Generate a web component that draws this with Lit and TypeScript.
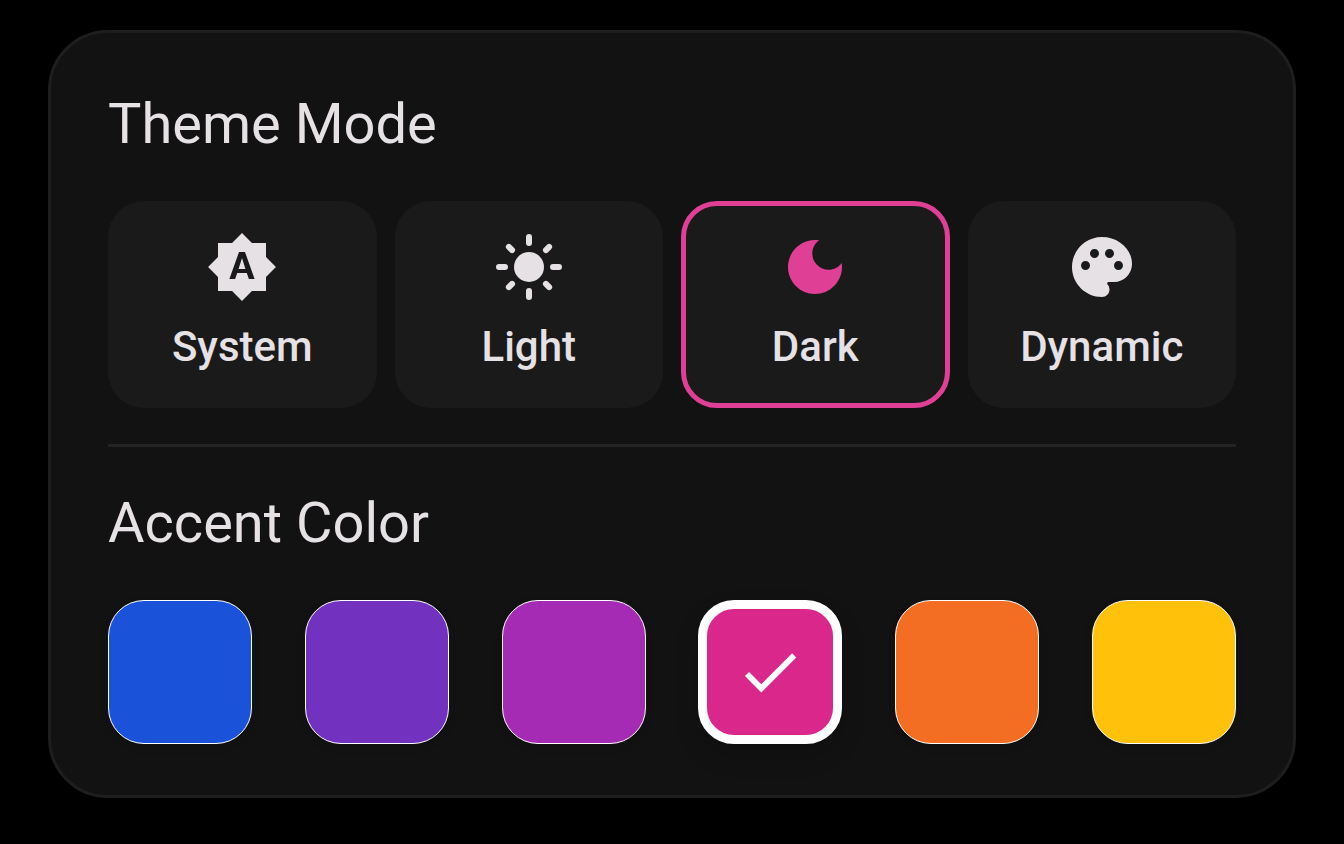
import { LitElement, html, css, svg } from "lit";
import { customElement, state } from "lit/decorators.js";
import { classMap } from "lit/directives/class-map.js";
import { styleMap } from "lit/directives/style-map.js";

const modes = [
  {
    name: "System",
    icon: svg`<path d="M10.85 12.65h2.3L12 9l-1.15 3.65zM20 8.69V4h-4.69L12 .69 8.69 4H4v4.69L.69 12 4 15.31V20h4.69L12 23.31 15.31 20H20v-4.69L23.31 12 20 8.69zM14.3 16l-.7-2h-3.2l-.7 2H7.8L11 7h2l3.2 9h-1.9z"/>`,
  },
  {
    name: "Light",
    icon: svg`<circle cx="12" cy="12" r="5"/><path stroke="currentColor" stroke-width="2" stroke-linecap="round" d="M12 2v2M12 20v2M2 12h2M20 12h2M5.29 5.29l1.06 1.06M17.65 17.65l1.06 1.06M5.29 18.71l1.06-1.06M17.65 6.35l1.06-1.06"/>`,
  },
  {
    name: "Dark",
    icon: svg`<path d="M12 3c-4.97 0-9 4.03-9 9s4.03 9 9 9 9-4.03 9-9c0-.46-.04-.92-.1-1.36-.98 1.37-2.58 2.26-4.4 2.26-2.98 0-5.4-2.42-5.4-5.4 0-1.81.89-3.42 2.26-4.4C12.92 3.04 12.46 3 12 3z"/>`,
  },
  {
    name: "Dynamic",
    icon: svg`<path d="M12 2C6.49 2 2 6.49 2 12s4.49 10 10 10c1.38 0 2.5-1.12 2.5-2.5 0-.61-.23-1.2-.64-1.67-.08-.1-.13-.21-.13-.33 0-.28.22-.5.5-.5H16c3.31 0 6-2.69 6-6 0-4.96-4.49-9-10-9zM6.5 13C5.67 13 5 12.33 5 11.5S5.67 10 6.5 10 8 10.67 8 11.5 7.33 13 6.5 13zm3-4C8.67 9 8 8.33 8 7.5S8.67 6 9.5 6s1.5.67 1.5 1.5S10.33 9 9.5 9zm5 0c-.83 0-1.5-.67-1.5-1.5S13.67 6 14.5 6s1.5.67 1.5 1.5S15.33 9 14.5 9zm3 4c-.83 0-1.5-.67-1.5-1.5s.67-1.5 1.5-1.5 1.5.67 1.5 1.5-.67 1.5-1.5 1.5z"/>`,
  },
];

const accents = [
  { name: "Blue", color: "#1a53d9" },
  { name: "Violet", color: "#7331c0" },
  { name: "Purple", color: "#a52bb4" },
  { name: "Pink", color: "#da278b" },
  { name: "Orange", color: "#f36e22" },
  { name: "Yellow", color: "#ffc10a" },
];

@customElement("app-root")
export class AppRoot extends LitElement {
  @state() private mode = "Dark";
  @state() private accent = "Pink";

  static styles = css`
    :host {
      display: block;
      box-sizing: border-box;
      min-height: 100vh;
      padding: 30px 48px;
      background: #000;
      color: #e6e1e5;
      font-family: Roboto, sans-serif;
    }
    .card {
      border: 3px solid #1e1e1e;
      border-radius: 60px;
      padding: 57px 57px 51px;
      background: #121212;
    }
    .title {
      margin: 0 0 42px;
      font-size: 56px;
      line-height: 69px;
      font-weight: 400;
    }
    .modes {
      display: grid;
      grid-template-columns: repeat(4, minmax(0, 1fr));
      gap: 18px;
    }
    button {
      box-sizing: border-box;
      margin: 0;
      font: inherit;
      color: inherit;
      cursor: pointer;
    }
    .mode {
      display: flex;
      flex-direction: column;
      align-items: center;
      gap: 12px;
      padding: 25px 0;
      border: 5px solid transparent;
      border-radius: 36px;
      background: #1a1a1a;
      font-size: 42px;
      line-height: 63px;
      font-weight: 500;
    }
    .mode.selected {
      border-color: #df4095;
    }
    .icon {
      display: block;
      width: 72px;
      height: 72px;
      fill: currentColor;
    }
    .selected .icon {
      color: #df4095;
    }
    .divider {
      height: 3px;
      margin: 36px 0 42px;
      border: 0;
      background: #232323;
    }
    .accents {
      display: flex;
      justify-content: space-between;
    }
    .swatch {
      display: grid;
      place-items: center;
      width: 144px;
      height: 144px;
      padding: 0;
      border: 1px solid #fff;
      border-radius: 36px;
      box-shadow: 0 3px 9px rgba(0, 0, 0, 0.12);
    }
    .swatch.chosen {
      border-width: 9px;
      box-shadow: 0 12px 24px rgba(0, 0, 0, 0.16);
    }
    .check {
      display: block;
      width: 70px;
      height: 70px;
      fill: #fff;
    }
  `;

  render() {
    return html`
      <main class="card">
        <h2 class="title" id="mode-title">Theme Mode</h2>
        <div class="modes" role="group" aria-labelledby="mode-title">
          ${modes.map(
            (m) => html`<button
              type="button"
              class=${classMap({ mode: true, selected: m.name === this.mode })}
              aria-pressed=${m.name === this.mode}
              @click=${() => (this.mode = m.name)}
            >
              <svg class="icon" viewBox="0 0 24 24" aria-hidden="true">${m.icon}</svg>
              <span>${m.name}</span>
            </button>`
          )}
        </div>
        <hr class="divider" />
        <h2 class="title" id="accent-title">Accent Color</h2>
        <div class="accents" role="group" aria-labelledby="accent-title">
          ${accents.map(
            (a) => html`<button
              type="button"
              class=${classMap({ swatch: true, chosen: a.name === this.accent })}
              style=${styleMap({ backgroundColor: a.color })}
              aria-label=${a.name}
              aria-pressed=${a.name === this.accent}
              @click=${() => (this.accent = a.name)}
            >
              ${a.name === this.accent
                ? html`<svg class="check" viewBox="0 0 24 24" aria-hidden="true">
                    <path d="M9 16.17L4.83 12l-1.42 1.41L9 19 21 7l-1.41-1.41L9 16.17z" />
                  </svg>`
                : ""}
            </button>`
          )}
        </div>
      </main>
    `;
  }
}
